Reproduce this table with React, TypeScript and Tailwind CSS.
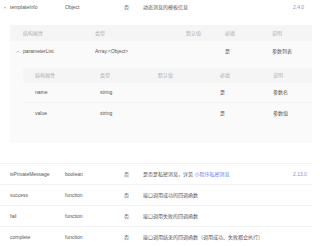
const font = { fontFamily: '"Liberation Sans", "Noto Sans CJK SC", sans-serif' };

function Caret() {
  return (
    <svg width="4" height="3" viewBox="0 0 8 6" className="block">
      <path d="M1 5 L4 2 L7 5" fill="none" stroke="#a0a0a0" strokeWidth="1.2" />
    </svg>
  );
}

const subRows = [
  { name: 'name', type: 'string', required: '是', desc: '参数名' },
  { name: 'value', type: 'string', required: '是', desc: '参数值' },
];

const rows = [
  {
    name: 'isPrivateMessage',
    type: 'boolean',
    required: '否',
    desc: (
      <>
        是否是私密消息，详见 <span className="text-[#5b82f0]">小程序私密消息</span>
      </>
    ),
    version: '2.13.0',
  },
  { name: 'success', type: 'function', required: '否', desc: '接口调用成功的回调函数', version: '' },
  { name: 'fail', type: 'function', required: '否', desc: '接口调用失败的回调函数', version: '' },
  { name: 'complete', type: 'function', required: '否', desc: '接口调用结束的回调函数（调用成功、失败都会执行）', version: '' },
];

function TopRow({ r }: { r: (typeof rows)[number] }) {
  return (
    <div className="flex items-center h-[21px] border-b border-[#f2f2f2] text-[#555]">
      <span className="pl-[10px] w-[65px]">{r.name}</span>
      <span className="w-[59px]">{r.type}</span>
      <span className="w-[19px]">{r.required}</span>
      <span className="w-[150px] whitespace-nowrap">{r.desc}</span>
      <span className="text-[#8a93bd]">{r.version}</span>
    </div>
  );
}

export default function App() {
  return (
    <div className="w-[320px] h-[246px] bg-white text-[5px] leading-none overflow-hidden" style={font}>
      <div className="w-[312px]">
        {/* templateInfo */}
        <div className="border-b border-[#f2f2f2] pb-[20px]">
          <div className="flex items-center h-[14px] text-[#555]">
            <span className="w-[10px] pl-[3px]">
              <Caret />
            </span>
            <span className="w-[55px]">templateInfo</span>
            <span className="w-[59px]">Object</span>
            <span className="w-[19px]">否</span>
            <span className="w-[150px]">动态消息的模板信息</span>
            <span className="text-[#8a93bd]">2.4.0</span>
          </div>

          <div className="ml-[10px] mt-[11px] bg-[#fafafa] rounded-[2px]">
            <div className="flex items-center h-[16px] bg-[#f5f5f5] text-[#b0b0b0]">
              <span className="pl-[13px] w-[85px]">结构属性</span>
              <span className="w-[91px]">类型</span>
              <span className="w-[39px]">默认值</span>
              <span className="w-[47px]">必填</span>
              <span>说明</span>
            </div>
            <div className="flex items-center h-[20px] text-[#555]">
              <span className="w-[13px] pl-[6px]">
                <Caret />
              </span>
              <span className="w-[72px]">parameterList</span>
              <span className="w-[130px]">Array.&lt;Object&gt;</span>
              <span className="w-[47px]">是</span>
              <span>参数列表</span>
            </div>

            <div className="ml-[13px] pt-[7px] pb-[20px]">
              <div className="flex items-center h-[15px] bg-[#f5f5f5] text-[#b0b0b0]">
                <span className="pl-[12px] w-[77px]">结构属性</span>
                <span className="w-[58px]">类型</span>
                <span className="w-[62px]">默认值</span>
                <span className="w-[53px]">必填</span>
                <span>说明</span>
              </div>
              {subRows.map((s, i) => (
                <div
                  key={s.name}
                  className={`flex items-center h-[20px] text-[#555] ${i === 0 ? 'border-b border-[#f2f2f2]' : ''}`}
                >
                  <span className="pl-[12px] w-[77px]">{s.name}</span>
                  <span className="w-[58px]">{s.type}</span>
                  <span className="w-[62px]"></span>
                  <span className="w-[53px]">{s.required}</span>
                  <span>{s.desc}</span>
                </div>
              ))}
            </div>
          </div>
        </div>

        {rows.map((r) => (
          <TopRow key={r.name} r={r} />
        ))}
      </div>
    </div>
  );
}
